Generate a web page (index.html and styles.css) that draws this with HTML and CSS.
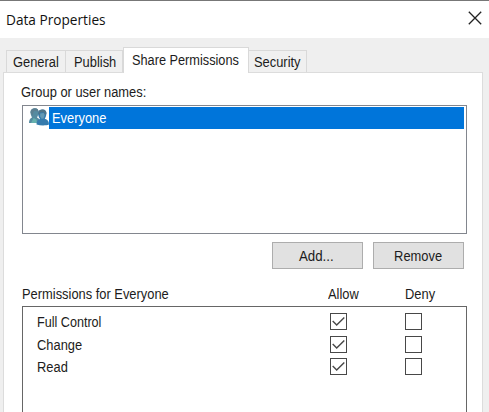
FILE: index.html
```html
<!DOCTYPE html>
<html lang="en">
<head>
<meta charset="utf-8">
<title>Data Properties</title>
<link rel="stylesheet" href="styles.css">
</head>
<body>
<main class="dialog">
  <header class="titlebar">
    <h1 class="title">Data Properties</h1>
    <svg class="close" width="14" height="14" viewBox="0 0 14 14"><path d="M.8.8l12.4 12.4M13.2.8L.8 13.2"/></svg>
  </header>
  <nav class="tabs">
    <div class="tab general"><span class="t">General</span></div>
    <div class="tab publish"><span class="t">Publish</span></div>
    <div class="tab active"><span class="t">Share Permissions</span></div>
    <div class="tab security"><span class="t">Security</span></div>
  </nav>
  <section class="panel">
    <div class="group-label"><span class="t">Group or user names:</span></div>
    <div class="users">
      <div class="user">
        <svg class="people" width="20" height="18" viewBox="0 0 20 18">
          <path d="M0 15c0-3 1-4.500 3-5.500C1.800 7 1.300 5 1.500 3.500 2 1 4 .2 6 .3c2.300 0 3.700 1.500 3.500 4C9.400 6.500 9 8 8 9.500c2 .8 3 2 3 5.500z" fill="#568ba0"/>
          <path d="M1.500 4.500C1.500 1.500 4 .2 6 .3c2.300 0 3.700 1.500 3.500 4l-1.300-1L5 3 4 5.500 3.500 8z" fill="#5b7f91"/>
          <path d="M2 15l2.500-5 3 1.500L8 15z" fill="#66b1ae"/>
          <path d="M7.500 16.500c0-3 1-4.500 3.500-5.500-1.500-2-2-4-2-6C9.200 2.500 11.200 1.500 13.500 1.500c2.600 0 4.200 1.600 3.900 4.300-.2 2-.7 3.700-1.700 5 3 .8 4.300 2.500 4.300 5.700-3 1.200-8.500 1.200-12.500 0z" fill="#367bad"/>
          <path d="M9.300 5.500c0-3 1.900-4 4.200-4 2.600 0 4.200 1.600 3.900 4.300L16 7l-1-2.500-3.500-.2-1 3z" fill="#517487"/>
          <path d="M11.200 5.500l3.500-.5 1 2-1.200 3.500-2 .2-1.300-2.500z" fill="#669ab4"/>
        </svg>
        <div class="selected"><span class="t">Everyone</span></div>
      </div>
    </div>
    <div class="actions">
      <button class="button"><span class="t add">Add...</span></button>
      <button class="button"><span class="t">Remove</span></button>
    </div>
    <div class="columns">
      <div><span class="t">Permissions for Everyone</span></div>
      <div><span class="t">Allow</span></div>
      <div><span class="t">Deny</span></div>
    </div>
    <div class="permissions">
      <div class="row">
        <div><span class="t full">Full Control</span></div>
        <svg class="check" width="17" height="17" viewBox="0 0 17 17"><rect x=".5" y=".5" width="16" height="16"/><path d="M2.700 8l4 4 7.600-7.600"/></svg>
        <svg class="check" width="17" height="17" viewBox="0 0 17 17"><rect x=".5" y=".5" width="16" height="16"/></svg>
      </div>
      <div class="row">
        <div><span class="t">Change</span></div>
        <svg class="check" width="17" height="17" viewBox="0 0 17 17"><rect x=".5" y=".5" width="16" height="16"/><path d="M2.700 8l4 4 7.600-7.600"/></svg>
        <svg class="check" width="17" height="17" viewBox="0 0 17 17"><rect x=".5" y=".5" width="16" height="16"/></svg>
      </div>
      <div class="row">
        <div><span class="t">Read</span></div>
        <svg class="check" width="17" height="17" viewBox="0 0 17 17"><rect x=".5" y=".5" width="16" height="16"/><path d="M2.700 8l4 4 7.600-7.600"/></svg>
        <svg class="check" width="17" height="17" viewBox="0 0 17 17"><rect x=".5" y=".5" width="16" height="16"/></svg>
      </div>
    </div>
  </section>
</main>
</body>
</html>
```
FILE: styles.css
```css
* { box-sizing: border-box; }
body { margin: 0; overflow: hidden; }
.dialog {
  width: 489px; height: 412px;
  display: flex; flex-direction: column;
  overflow: hidden;
  background: #efefef;
  border-top: 1px solid #777;
  color: #1c1c20;
  font: 14px/16px "Liberation Sans", Arial, sans-serif;
}
.t { display: inline-block; white-space: nowrap; transform: scaleX(.92); transform-origin: 0 50%; }
.titlebar {
  height: 37px; flex: none;
  display: flex; justify-content: space-between; align-items: flex-start;
  padding: 10px 7px 0 6px;
  background: #fff;
}
.title { margin: 0; font: 400 15px/17px "Open Sans", "Noto Sans", sans-serif; transform: scaleX(.91); transform-origin: 0 50%; color: #111; }
.close { fill: none; stroke: #222; stroke-width: 1.3; }
.tabs { height: 34px; flex: none; display: flex; align-items: flex-end; padding-left: 6px; }
.tab { height: 22px; padding: 3px 0 0 6px; border: 1px solid #d9d9d9; border-bottom: 0; background: #f0f0f0; }
.general { width: 60px; }
.publish { width: 57px; border-left: 0; padding-left: 8px; }
.active { width: 126px; height: 26px; margin-bottom: -1px; padding: 4px 0 0 8px; background: #fff; position: relative; }
.active .t { transform: scaleX(.91); }
.security { width: 58px; border-left: 0; padding-left: 5px; }
.panel { flex: 1; margin: 0 6px 0 3px; padding: 11px 15px 0 18px; background: #fff; border: 1px solid #dcdcdc; border-bottom: 0; }
.group-label { height: 21px; margin-left: -1px; }
.users { height: 129px; border: 1px solid #82868e; padding: 1px 2px; }
.user { display: flex; padding-left: 4px; }
.people { flex: none; margin-top: 1px; }
.selected { flex: 1; height: 22px; padding: 3px 0 0 3px; background: #0075da; color: #fff; }
.actions { display: flex; justify-content: flex-end; gap: 10px; padding: 8px 3px 0 0; }
.button { width: 91px; height: 27px; padding: 0; border: 1px solid #adadad; background: #e1e1e1; color: inherit; font: inherit; }
.button .t { transform-origin: 50% 50%; }
.button .add { transform: translateX(-1px) scaleX(.95); }
.columns, .row { display: grid; grid-template-columns: 306px 77px 1fr; }
.columns { height: 37px; padding-top: 17px; }
.permissions { height: 120px; border: 1px solid #666; padding: 6px 0 0 14px; }
.row { height: 22.5px; grid-template-columns: 293px 75px 1fr; }
.row > div { padding-top: 1px; }
.full { transform: scaleX(.9); }
.check { fill: #fff; stroke: #484848; stroke-width: 1; }
.check path { fill: none; stroke-width: 1.4; }
```
